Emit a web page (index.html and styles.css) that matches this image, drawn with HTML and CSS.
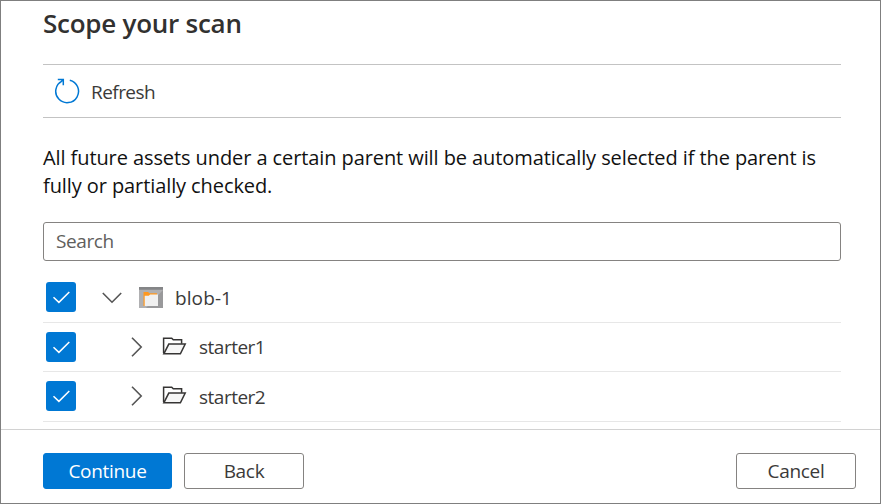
FILE: index.html
```html
<!DOCTYPE html>
<html lang="en">
<head>
<meta charset="utf-8">
<title>Scope your scan</title>
<link rel="stylesheet" href="styles.css">
</head>
<body>
<div class="panel">
  <main class="content">
    <h1 class="title">Scope your scan</h1>
    <div class="toolbar">
      <svg class="refresh-icon" viewBox="0 0 26 26" width="26" height="26"><path d="M15.8 2.2A11.4 11.4 0 1 1 8 3.1M3.8 1.6H9.3V7.2M9.1 1.8L5.6 5"/></svg>
      <span class="refresh-label">Refresh</span>
    </div>
    <p class="description">All future assets under a certain parent will be automatically selected if the parent is<br>fully or partially checked.</p>
    <div class="search"><span class="search-label">Search</span></div>
    <div class="tree">
      <div class="row root">
        <span class="check"><svg viewBox="0 0 30 30" width="30" height="30"><path d="M7.5 15.2L12.9 20.4L23.3 10"/></svg></span>
        <svg class="chevron" viewBox="0 0 20 12" width="20" height="12"><path d="M.8 1L10 10.2L19.2 1"/></svg>
        <svg class="container-icon" viewBox="0 0 24 21" width="24" height="21"><path fill="#99999b" d="M0 2h24v19H0z"/><path fill="#b0b0b2" d="M0 3h24L7 21H0z"/><path fill="#848587" d="M0 0h24v2.5H0z"/><path fill="#ff981f" d="M4.5 5h4.6l1.2 1.2H18v3H6V19H4.5z"/><path fill="#f0f0f0" d="M5.7 19V8.8h4.1L11.1 7.4H19V19z"/></svg>
        <span class="root-label">blob-1</span>
      </div>
      <div class="row child">
        <span class="check"><svg viewBox="0 0 30 30" width="30" height="30"><path d="M7.5 15.2L12.9 20.4L23.3 10"/></svg></span>
        <svg class="chevron" viewBox="0 0 12 20" width="12" height="20"><path d="M1 .8L10.2 10L1 19.2"/></svg>
        <svg class="folder" viewBox="0 0 25 18" width="25" height="18"><path d="M1.6 16V1.2H9.7L11.3 2.8H19.6V6.8"/><path class="flap" d="M1.8 16.8L6.8 7.1H23.2L18.4 16.8Z"/></svg>
        <span class="child-label">starter1</span>
      </div>
      <div class="row child last">
        <span class="check"><svg viewBox="0 0 30 30" width="30" height="30"><path d="M7.5 15.2L12.9 20.4L23.3 10"/></svg></span>
        <svg class="chevron" viewBox="0 0 12 20" width="12" height="20"><path d="M1 .8L10.2 10L1 19.2"/></svg>
        <svg class="folder" viewBox="0 0 25 18" width="25" height="18"><path d="M1.6 16V1.2H9.7L11.3 2.8H19.6V6.8"/><path class="flap" d="M1.8 16.8L6.8 7.1H23.2L18.4 16.8Z"/></svg>
        <span class="child-label">starter2</span>
      </div>
    </div>
  </main>
  <footer class="footer">
    <button class="button primary">Continue</button>
    <button class="button back">Back</button>
    <button class="button cancel">Cancel</button>
  </footer>
</div>
</body>
</html>
```
FILE: styles.css
```css
* { box-sizing: border-box; }
body { margin: 0; font-family: "Open Sans", "Noto Sans", sans-serif; font-size: 19px; color: #3b3a39; background: #fff; }
svg { display: block; flex: none; fill: none; }
.panel { width: 881px; height: 504px; border: 1px solid #7f7f7f; display: flex; flex-direction: column; overflow: hidden; }
.content { height: 428px; flex: none; padding: 0 39px 0 42px; }
.title { margin: 0; height: 63px; padding-top: 4px; font-size: 26px; line-height: 36px; font-weight: 600; letter-spacing: -.25px; white-space: nowrap; color: #323130; }
.toolbar { height: 54px; border-top: 1px solid #c3c3c3; border-bottom: 1px solid #c3c3c3; display: flex; align-items: center; padding-left: 11px; }
.refresh-icon { stroke: #0078d4; stroke-width: 1.5; }
.refresh-label { margin-left: 11px; padding-top: 1px; letter-spacing: -.55px; }
.description { margin: 26px 0 0; height: 56px; font-size: 20px; line-height: 28px; color: #111; white-space: nowrap; letter-spacing: -.09px; }
.search { margin-top: 22px; height: 39px; border: 1px solid #858381; border-radius: 3px; padding: 0 12px 2px; display: flex; align-items: center; color: #605e5c; }
.search-label { letter-spacing: -.4px; }
.tree { margin-top: 12px; }
.row { height: 50px; border-bottom: 1px solid #e7e7e7; display: flex; align-items: center; padding-left: 3px; letter-spacing: -.5px; }
.row.root { letter-spacing: .1px; }
.row.child { height: 49px; }
.row.last { height: 50px; }
.check { width: 30px; height: 30px; border-radius: 3px; background: #0078d4; }
.root .check, .last .check { margin-bottom: 1px; }
.check svg { stroke: #fff; stroke-width: 1.5; }
.chevron { stroke: #555; stroke-width: 1.6; margin-left: 26px; }
.container-icon { margin-left: 17px; }
.root-label { margin-left: 12px; }
.child .chevron { margin-left: 55px; }
.last .chevron { margin-bottom: 2px; }
.folder { margin-left: 19px; margin-bottom: 2px; stroke: #363534; stroke-width: 1.5; }
.last .folder { margin-bottom: 3px; }
.flap { fill: #f7f7f7; }
.child-label { margin-left: 12px; }
.footer { flex: 1; border-top: 1px solid #d2d2d2; display: flex; align-items: flex-start; gap: 12px; padding: 23px 24px 0 42px; }
.button { height: 36px; width: 120px; padding: 0; border: 1px solid #858381; border-radius: 3px; background: #fff; color: #3b3a39; font: 19px/34px "Open Sans", "Noto Sans", sans-serif; letter-spacing: -.3px; }
.primary { width: 129px; background: #0078d4; border-color: #0078d4; color: #fff; }
.cancel { margin-left: auto; }
```
